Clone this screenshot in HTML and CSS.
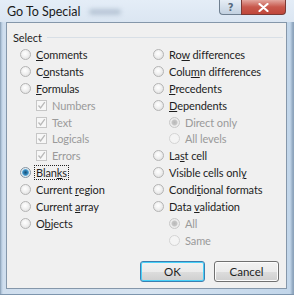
FILE: index.html
```html
<!DOCTYPE html>
<html lang="en">
<head>
  <meta charset="UTF-8">
  <title>Go To Special</title>
  <link rel="stylesheet" href="styles.css">
</head>
<body>
<div class="window">
  <!-- Title bar -->
  <div class="titlebar">
    <span class="title">Go To Special</span>
    <span class="smudge"></span>
    <div class="caption">
      <span class="cap-btn help">?</span>
      <span class="cap-btn close">
        <svg width="11" height="9" viewBox="0 0 11 9"><path d="M1.5 1 L9.5 8 M9.5 1 L1.5 8" stroke="#fff" stroke-width="2.2" stroke-linecap="round"/></svg>
      </span>
    </div>
  </div>

  <div class="client">
    <div class="group-head">
      <span>Select</span>
      <span class="group-line"></span>
    </div>

    <div class="cols">
      <div class="col">
        <div class="row"><span class="radio"></span><span><u>C</u>omments</span></div>
        <div class="row"><span class="radio"></span><span>C<u>o</u>nstants</span></div>
        <div class="row"><span class="radio"></span><span><u>F</u>ormulas</span></div>
        <div class="row sub disabled"><span class="check"><svg width="9" height="9" viewBox="0 0 9 9"><path d="M1.5 4.5 L3.6 7 L7.8 1.2" fill="none" stroke="#b9b9b9" stroke-width="1.3"/></svg></span><span>Numbers</span></div>
        <div class="row sub disabled"><span class="check"><svg width="9" height="9" viewBox="0 0 9 9"><path d="M1.5 4.5 L3.6 7 L7.8 1.2" fill="none" stroke="#b9b9b9" stroke-width="1.3"/></svg></span><span>Text</span></div>
        <div class="row sub disabled"><span class="check"><svg width="9" height="9" viewBox="0 0 9 9"><path d="M1.5 4.5 L3.6 7 L7.8 1.2" fill="none" stroke="#b9b9b9" stroke-width="1.3"/></svg></span><span>Logicals</span></div>
        <div class="row sub disabled"><span class="check"><svg width="9" height="9" viewBox="0 0 9 9"><path d="M1.5 4.5 L3.6 7 L7.8 1.2" fill="none" stroke="#b9b9b9" stroke-width="1.3"/></svg></span><span>Errors</span></div>
        <div class="row"><span class="radio checked"></span><span class="focus">Blan<u>k</u>s</span></div>
        <div class="row"><span class="radio"></span><span>Current <u>r</u>egion</span></div>
        <div class="row"><span class="radio"></span><span>Current <u>a</u>rray</span></div>
        <div class="row"><span class="radio"></span><span>O<u>b</u>jects</span></div>
      </div>
      <div class="col">
        <div class="row"><span class="radio"></span><span>Ro<u>w</u> differences</span></div>
        <div class="row"><span class="radio"></span><span>Colu<u>m</u>n differences</span></div>
        <div class="row"><span class="radio"></span><span><u>P</u>recedents</span></div>
        <div class="row"><span class="radio"></span><span><u>D</u>ependents</span></div>
        <div class="row sub disabled"><span class="radio dim-dot"></span><span>Direct only</span></div>
        <div class="row sub disabled"><span class="radio dim"></span><span>All levels</span></div>
        <div class="row"><span class="radio"></span><span>La<u>s</u>t cell</span></div>
        <div class="row"><span class="radio"></span><span>Visible cells onl<u>y</u></span></div>
        <div class="row"><span class="radio"></span><span>Condi<u>t</u>ional formats</span></div>
        <div class="row"><span class="radio"></span><span>Data <u>v</u>alidation</span></div>
        <div class="row sub disabled"><span class="radio dim-dot"></span><span>All</span></div>
        <div class="row sub disabled"><span class="radio dim"></span><span>Same</span></div>
      </div>
    </div>

    <div class="buttons">
      <button class="default">OK</button>
      <button>Cancel</button>
    </div>
  </div>
</div>
</body>
</html>
```

FILE: styles.css
```css
/* General reset */
* {
  margin: 0;
  padding: 0;
  box-sizing: border-box;
}

body {
  width: 294px;
  height: 295px;
  overflow: hidden;
  font-family: Lato, 'Noto Sans', sans-serif;
  font-size: 11px;
  letter-spacing: -0.1px;
  color: #1e1e1e;
  background: #c9d9ea;
}

.window {
  height: 295px;
  display: flex;
  flex-direction: column;
  padding: 0 7px 5px 6px;
  background: linear-gradient(to right, #7f93a8 0, #a9bfd5 1px, #cfdeee 3px, #d7e4f1 50%, #c2d6ea calc(100% - 4px), #8da4bc calc(100% - 1px));
  border-bottom: 1px solid #7d95ad;
}

/* Title bar */
.titlebar {
  height: 22px;
  display: flex;
  align-items: flex-start;
  margin: 0 -7px 0 -6px;
  padding: 0 8px 0 7px;
  background: linear-gradient(#e4edf7, #dbe6f2);
}

.title {
  margin-top: 4px;
  font-size: 12.5px;
  letter-spacing: 0;
  color: #1a1a1a;
}

.smudge {
  width: 32px;
  height: 6px;
  margin: 9px 0 0 8px;
  background: #b8c6d6;
  filter: blur(2px);
  border-radius: 3px;
}

.caption {
  margin-left: auto;
  display: flex;
}

.cap-btn {
  height: 15px;
  display: flex;
  align-items: center;
  justify-content: center;
  border: 1px solid #6f7f90;
  border-top: none;
}

.help {
  width: 22px;
  border-radius: 0 0 0 4px;
  border-right: none;
  background: linear-gradient(#e6edf5, #c3d1e0);
  color: #56697e;
  font-family: 'DejaVu Sans', sans-serif;
  font-size: 10px;
  font-weight: bold;
}

.close {
  width: 45px;
  border-radius: 0 0 4px 0;
  border-color: #7a3a35;
  background: linear-gradient(#e3a79f, #c8584c 50%, #c0473b);
}

/* Client area */
.client {
  flex: 1;
  display: flex;
  flex-direction: column;
  background: #f0f0f0;
  border: 1px solid #8597aa;
  padding: 8px 3px 5px 6px;
}

.group-head {
  display: flex;
  align-items: center;
  gap: 5px;
  height: 13px;
}

.group-line {
  flex: 1;
  height: 1px;
  background: #d8dfe6;
}

.cols {
  display: grid;
  grid-template-columns: 133px 1fr;
  margin: 2px 0 0 7px;
}

.row {
  height: 16.9px;
  display: flex;
  align-items: center;
  gap: 5px;
  white-space: nowrap;
}

.row.sub {
  padding-left: 16px;
}

.disabled {
  color: #9a9a9a;
}

u {
  text-underline-offset: 1px;
}

.radio {
  width: 11px;
  height: 11px;
  flex: none;
  border-radius: 50%;
  border: 1px solid #b4b4b4;
  background: radial-gradient(circle at 45% 40%, #ffffff 0, #f4f4f4 35%, #dadada 100%);
}

.radio.checked {
  border-color: #8595a3;
  background: radial-gradient(circle, #1b4f73 0, #2c7db2 2px, #5da7d4 3px, #e6eef3 3.8px, #d0d6db 100%);
}

.radio.dim {
  border-color: #d4d4d4;
  background: #f4f4f4;
}

.radio.dim-dot {
  border-color: #c8c8c8;
  background: radial-gradient(circle, #b8b8b8 0, #c6c6c6 2.5px, #eeeeee 3.5px, #e2e2e2 100%);
}

.check {
  width: 11px;
  height: 11px;
  flex: none;
  display: flex;
  align-items: center;
  justify-content: center;
  border: 1px solid #c6c6c6;
  background: #f7f7f7;
}

.focus {
  outline: 1px dotted #222;
  outline-offset: 0;
  padding: 0 1px;
  margin-left: -1px;
}

/* Dialog buttons */
.buttons {
  margin-top: auto;
  display: flex;
  justify-content: flex-end;
  gap: 9px;
  padding: 0 4px 1px 0;
}

button {
  width: 65px;
  height: 21px;
  font-family: inherit;
  font-size: 11.5px;
  color: #1e1e1e;
  border: 1px solid #707070;
  border-radius: 3px;
  background: linear-gradient(#f2f2f2 0, #ebebeb 50%, #dddddd 51%, #cfcfcf 100%);
  box-shadow: inset 0 0 0 1px #fcfcfc;
}

button.default {
  border-color: #3c7fb1;
  box-shadow: inset 0 0 0 1px #48d1f9;
}
```
